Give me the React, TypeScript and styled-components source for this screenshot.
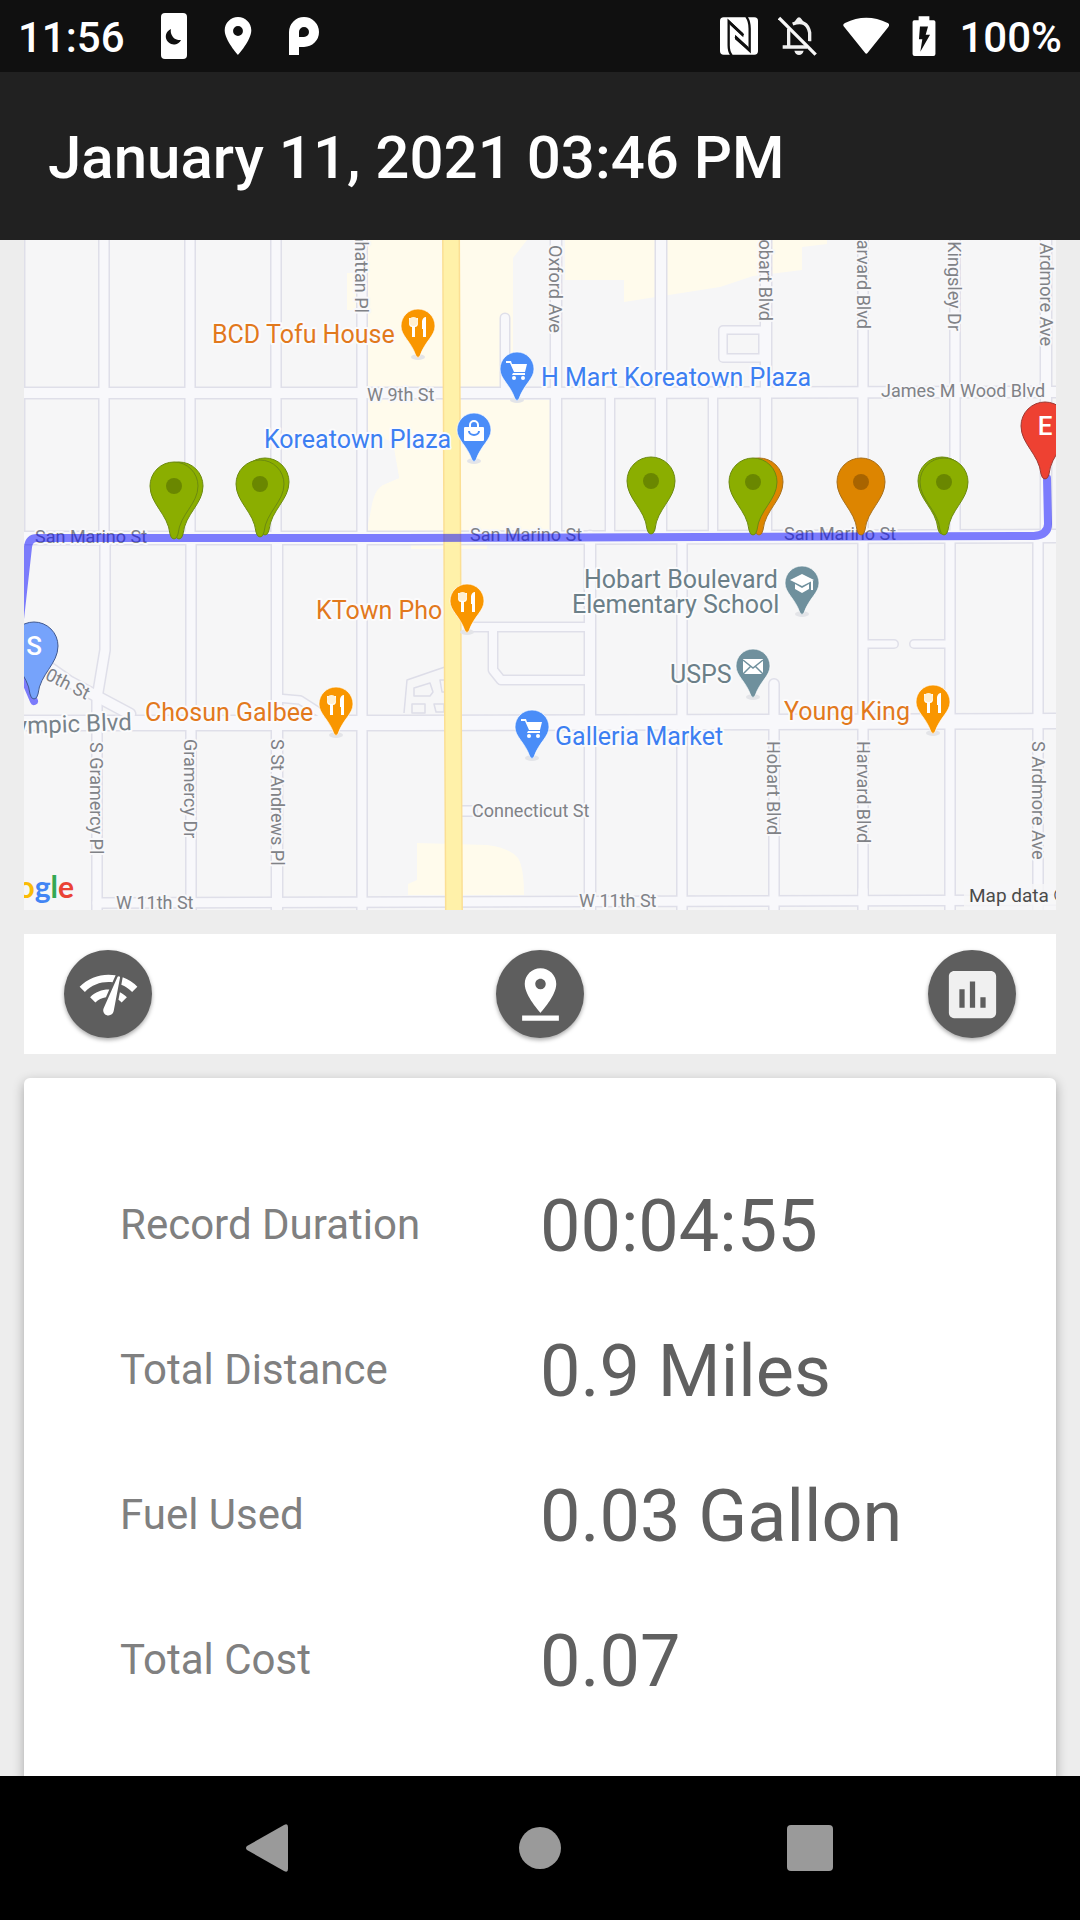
import React from "react";
import styled, { createGlobalStyle } from "styled-components";
import { MdAssessment, MdNetworkCheck, MdPinDrop } from "react-icons/md";

const GlobalStyle = createGlobalStyle`
  *, *::before, *::after { box-sizing: border-box; }
  body {
    margin: 0;
    background: #000;
    font-family: Roboto, "Noto Sans", sans-serif;
  }
`;

const Screen = styled.div`
  display: flex;
  flex-direction: column;
  height: 100vh;
  background: #ededed;
`;

const StatusBar = styled.div`
  display: flex;
  justify-content: space-between;
  flex: none;
  height: 72px;
  padding: 0 18px;
  background: #101010;
`;

const StatusText = styled.span`
  padding-top: 4px;
  color: #fff;
  font-size: 42px;
  font-weight: 500;
  line-height: 48px;
`;

const StatusGroup = styled.div<{ $gap: number }>`
  display: flex;
  align-items: center;
  gap: ${(p) => p.$gap}px;

  svg {
    display: block;
    flex: none;
  }
`;

const AppBar = styled.header`
  display: flex;
  align-items: center;
  flex: none;
  height: 168px;
  padding: 4px 48px 0;
  background: #212121;
`;

const Title = styled.h1`
  margin: 0;
  color: #fff;
  font-size: 60px;
  font-weight: 500;
  line-height: 72px;
`;

const Content = styled.main`
  display: flex;
  flex-direction: column;
  flex: 1;
  gap: 24px;
  min-height: 0;
  padding: 0 24px;
  overflow: hidden;
`;

const MapView = styled.svg`
  display: block;
  flex: none;
  width: 100%;
  aspect-ratio: 1032 / 670;
  background: #f6f6f7;
`;

const StreetText = styled.text`
  fill: #808287;
  stroke: #f8f8fa;
  stroke-width: 4px;
  stroke-linejoin: round;
  paint-order: stroke;
  font-size: 18px;
`;

const PlaceText = styled.text<{ $color: string }>`
  fill: ${(p) => p.$color};
  stroke: #fbfbfc;
  stroke-width: 4px;
  stroke-linejoin: round;
  paint-order: stroke;
  font-size: 25px;
`;

const AvenueText = styled(PlaceText)`
  font-size: 24px;
`;

const PinLetter = styled.text`
  fill: #fff;
  font-size: 26px;
  font-weight: 500;
  text-anchor: middle;
`;

const Wordmark = styled.text`
  font-family: Lato, Roboto, sans-serif;
  font-size: 30px;
  font-weight: 700;
  text-anchor: end;
`;

const Attribution = styled.text`
  fill: #4a4a4a;
  font-size: 19px;
`;

const Toolbar = styled.div`
  display: flex;
  align-items: center;
  justify-content: space-between;
  flex: none;
  height: 120px;
  padding: 0 40px;
  background: #fff;
`;

const RoundButton = styled.button<{ $color: string }>`
  display: flex;
  align-items: center;
  justify-content: center;
  width: 88px;
  height: 88px;
  padding: 0;
  border: 0;
  border-radius: 50%;
  background: #5e5e5e;
  box-shadow: 0 2px 4px rgba(0, 0, 0, 0.35);
  color: ${(p) => p.$color};
  font-size: 63px;
`;

const Card = styled.section`
  flex: 1 0 auto;
  padding: 76px 96px 48px;
  border-radius: 6px;
  background: #fff;
  box-shadow: 0 4px 12px rgba(0, 0, 0, 0.3);
`;

const Stats = styled.dl`
  margin: 0;
`;

const StatRow = styled.div`
  display: grid;
  grid-template-columns: 1fr 1fr;
  align-items: center;
  height: 145px;
`;

const StatLabel = styled.dt`
  padding-bottom: 4px;
  color: #808080;
  font-size: 42px;
  line-height: 48px;
`;

const StatValue = styled.dd`
  margin: 0;
  color: #606060;
  font-size: 72px;
  line-height: 84px;
  white-space: nowrap;
`;

const NavBar = styled.nav`
  display: flex;
  justify-content: center;
  flex: none;
  height: 144px;
  background: #000;
`;

const NavButton = styled.button`
  display: flex;
  align-items: center;
  justify-content: center;
  width: 25%;
  padding: 0;
  border: 0;
  background: none;
  color: #9a9a9a;
`;

const ORANGE = "#e2791d";
const BLUE = "#3d7ff2";
const SLATE = "#6b7f88";

const roads: { d: string; w: number }[] = [
  { d: "M19 240V536", w: 13 },
  { d: "M104 240V536", w: 12 },
  { d: "M190 240V536", w: 12 },
  { d: "M276 240V536", w: 12 },
  { d: "M362 240V910", w: 12 },
  { d: "M505 318V392", w: 11 },
  { d: "M556 240V536", w: 13 },
  { d: "M610 396V536", w: 11 },
  { d: "M661 240V536", w: 13 },
  { d: "M713 396V536", w: 11 },
  { d: "M766 240V536", w: 13 },
  { d: "M863 240V900", w: 12 },
  { d: "M955 240V536", w: 12 },
  { d: "M1046 240V536", w: 13 },
  { d: "M723 330V358H763V330Z", w: 10 },
  { d: "M105 536V650L97 698V930", w: 12 },
  { d: "M191 536V930", w: 12 },
  { d: "M277 536V930", w: 13 },
  { d: "M590 536V930", w: 13 },
  { d: "M682 536V930", w: 12 },
  { d: "M774 684V930", w: 12 },
  { d: "M863 890V930", w: 12 },
  { d: "M950 536V930", w: 12 },
  { d: "M1038 536V930", w: 12 },
  { d: "M457 627H590M493 627V670L501 680H590", w: 11 },
  { d: "M863 644H894M914 644H950", w: 10 },
  { d: "M454 811H472", w: 12 },
  { d: "M10 640L70 682L130 714", w: 13 },
  { d: "M277 698L300 700L325 716", w: 10 },
  { d: "M10 393H440L1070 392", w: 13 },
  { d: "M10 538H400L1070 536", w: 15 },
  { d: "M10 723H400L1070 721", w: 17 },
  { d: "M97 903L1070 900", w: 12 },
];

type StreetLabel = { text: string; x: number; y: number; rotate?: number; end?: boolean };

const streets: StreetLabel[] = [
  { text: "W 9th St", x: 367, y: 401 },
  { text: "James M Wood Blvd", x: 881, y: 397 },
  { text: "San Marino St", x: 35, y: 543 },
  { text: "San Marino St", x: 470, y: 541 },
  { text: "San Marino St", x: 784, y: 540 },
  { text: "Connecticut St", x: 472, y: 817 },
  { text: "W 11th St", x: 116, y: 909 },
  { text: "W 11th St", x: 579, y: 907 },
  { text: "Manhattan Pl", x: 355, y: 313, rotate: 90, end: true },
  { text: "Oxford Ave", x: 549, y: 245, rotate: 90 },
  { text: "Hobart Blvd", x: 759, y: 321, rotate: 90, end: true },
  { text: "Harvard Blvd", x: 857, y: 329, rotate: 90, end: true },
  { text: "S Kingsley Dr", x: 948, y: 331, rotate: 90, end: true },
  { text: "S Ardmore Ave", x: 1040, y: 346, rotate: 90, end: true },
  { text: "S Gramercy Pl", x: 90, y: 742, rotate: 90 },
  { text: "Gramercy Dr", x: 184, y: 739, rotate: 90 },
  { text: "S St Andrews Pl", x: 271, y: 739, rotate: 90 },
  { text: "Hobart Blvd", x: 767, y: 741, rotate: 90 },
  { text: "Harvard Blvd", x: 857, y: 741, rotate: 90 },
  { text: "S Ardmore Ave", x: 1032, y: 741, rotate: 90 },
  { text: "10th St", x: 86, y: 700, rotate: 27, end: true },
];

const places = [
  { text: "BCD Tofu House", x: 212, y: 343, color: ORANGE },
  { text: "H Mart Koreatown Plaza", x: 541, y: 386, color: BLUE },
  { text: "Koreatown Plaza", x: 264, y: 448, color: BLUE },
  { text: "KTown Pho", x: 316, y: 619, color: ORANGE },
  { text: "Hobart Boulevard", x: 584, y: 588, color: SLATE },
  { text: "Elementary School", x: 572, y: 613, color: SLATE },
  { text: "USPS", x: 670, y: 683, color: SLATE },
  { text: "Chosun Galbee", x: 145, y: 721, color: ORANGE },
  { text: "Galleria Market", x: 555, y: 745, color: BLUE },
  { text: "Young King", x: 784, y: 720, color: ORANGE },
];

type Glyph = "food" | "cart" | "bag" | "school" | "mail";

const poiPins: { x: number; y: number; glyph: Glyph }[] = [
  { x: 418, y: 309, glyph: "food" },
  { x: 517, y: 352, glyph: "cart" },
  { x: 474, y: 413, glyph: "bag" },
  { x: 467, y: 584, glyph: "food" },
  { x: 336, y: 687, glyph: "food" },
  { x: 532, y: 710, glyph: "cart" },
  { x: 802, y: 566, glyph: "school" },
  { x: 753, y: 649, glyph: "mail" },
  { x: 933, y: 685, glyph: "food" },
];

const glyphColor: Record<Glyph, string> = {
  food: "#f99600",
  cart: "#4a8df8",
  bag: "#4a8df8",
  school: "#6f909d",
  mail: "#6f909d",
};

const PinGlyph = ({ glyph }: { glyph: Glyph }) => {
  switch (glyph) {
    case "food":
      return (
        <g>
          <path d="M-9 9h9v5q0 4-3 4v10h-3V18q-3 0-3-4z" fill="#fff" />
          <circle cx="-4.500" cy="12.500" r="4.500" fill="#fff0d2" />
          <path d="M4 12q1-4 4-4v20H5v-8H4z" fill="#fff" />
        </g>
      );
    case "cart":
      return (
        <g fill="#fff">
          <path d="M-11 9h5l1 3H10L8 20H-3L-7 11h-4z" />
          <path d="M-4 21H8v2H-5z" />
          <circle cx="-3" cy="26" r="2" />
          <circle cx="6" cy="26" r="2" />
        </g>
      );
    case "bag":
      return (
        <g>
          <path d="M-4 15v-3a4 4 0 0 1 8 0v3" fill="none" stroke="#fff" strokeWidth="2" />
          <rect x="-10" y="14" width="20" height="14" rx="1" fill="#fff" />
          <path d="M-5 18a5 4 0 0 0 10 0" fill="none" stroke="#4a8df8" strokeWidth="2" />
        </g>
      );
    case "school":
      return (
        <g fill="#fff">
          <path d="M0 8l12 6-12 6-12-6z" />
          <path d="M-7 18l7 4 7-4v5l-7 4-7-4zM9 15h2v9H9z" />
        </g>
      );
    default:
      return (
        <g>
          <rect x="-10" y="10" width="20" height="15" fill="#fff" />
          <path d="M-10 11l10 8 10-8M-10 25l8-8M10 25l-8-8" fill="none" stroke="#6f909d" strokeWidth="1.500" />
        </g>
      );
  }
};

const PoiPin = ({ x, y, glyph }: { x: number; y: number; glyph: Glyph }) => (
  <g transform={`translate(${x} ${y})`}>
    <ellipse cx="0" cy="48" rx="7" ry="3" fill="#e3e4e8" />
    <path
      d="M0 0A17 17 0 0 1 17 17C17 27 7 32 2 47Q0 50-2 47C-7 32-17 27-17 17A17 17 0 0 1 0 0Z"
      fill={glyphColor[glyph]}
      stroke="#fff"
      strokeOpacity="0.7"
      strokeWidth="1"
    />
    <PinGlyph glyph={glyph} />
  </g>
);

type MarkerProps = { x: number; y: number; fill: string; edge: string; dot?: string; letter?: string };

const Marker = ({ x, y, fill, edge, dot, letter }: MarkerProps) => (
  <g transform={`translate(${x} ${y})`}>
    <path
      d="M0 0A24 24 0 0 1 24 24C24 42 6 52 4 72Q3 77 0 77Q-3 77-4 72C-6 52-24 42-24 24A24 24 0 0 1 0 0Z"
      fill={fill}
      stroke={edge}
      strokeWidth="1"
    />
    {dot && <circle cx="0" cy="24" r="8" fill={dot} />}
    {letter && (
      <PinLetter x="0" y="33">
        {letter}
      </PinLetter>
    )}
  </g>
);

const green = { fill: "#8bae00", edge: "#6c8a10" };
const amber = { fill: "#dd8500", edge: "#a8701c" };

const markers: MarkerProps[] = [
  { x: 179, y: 462, ...green },
  { x: 174, y: 462, ...green, dot: "#6a8700" },
  { x: 265, y: 458, ...green },
  { x: 260, y: 460, ...green, dot: "#6a8700" },
  { x: 651, y: 457, ...green, dot: "#6a8700" },
  { x: 759, y: 458, ...amber },
  { x: 753, y: 458, ...green, dot: "#6a8700" },
  { x: 861, y: 458, ...amber, dot: "#a86400" },
  { x: 942, y: 457, ...green },
  { x: 944, y: 458, ...green, dot: "#6a8700" },
  { x: 1045, y: 402, fill: "#ee4132", edge: "#9c3a34", letter: "E" },
];

const TripMap = () => (
  <MapView viewBox="24 240 1032 670" preserveAspectRatio="xMidYMid slice" role="img" aria-label="Trip map">
    <g fill="#fffbec">
      <path d="M347 273h14v37h-14z" />
      <path d="M368 240H527L513 258V392H368z" />
      <path d="M368 400H550V531H368V520L372 500Q376 486 385 484L399 478L393 443L368 430z" />
      <path d="M565 240H827V244L802 247V270L753 276L720 287L624 302V280H565z" />
      <path d="M411 543h76v6h-76z" />
      <path d="M417 843L487 845Q510 848 518 858Q524 868 524 895H408V884L417 880z" />
    </g>
    <path d="M368 430L393 443L399 478L385 484Q374 488 371 510L368 524z" fill="#f6f6f7" />

    <g fill="none" strokeLinecap="round" strokeLinejoin="round">
      {roads.map((r) => (
        <path key={r.d} d={r.d} stroke="#dfdfe9" strokeWidth={r.w} />
      ))}
      {roads.map((r) => (
        <path key={r.d} d={r.d} stroke="#f8f8fb" strokeWidth={r.w - 3} />
      ))}
    </g>

    <g fill="none" stroke="#dddde8" strokeWidth="1.500" strokeLinejoin="round">
      <path d="M404 713L407 680L436 670L445 667" />
      <path d="M414 688L430 683L433 692L430 696L414 696z" />
      <path d="M412 704h13v9h-13zM434 704h10v8h-8z" />
      <path d="M440 680h5v12h-3z" />
    </g>

    <path d="M451 230L453 720L454 920" stroke="#fbdf94" strokeWidth="18" fill="none" />
    <path d="M451 230L453 720L454 920" stroke="#fff1a9" strokeWidth="15" fill="none" />

    {streets.map((s) => (
      <StreetText
        key={`${s.text}-${s.x}-${s.y}`}
        textAnchor={s.end ? "end" : "start"}
        transform={`translate(${s.x} ${s.y}) rotate(${s.rotate ?? 0})`}
      >
        {s.text}
      </StreetText>
    ))}
    <AvenueText $color="#77828a" textAnchor="end" transform="translate(132 730) rotate(-2)">
      Olympic Blvd
    </AvenueText>
    {places.map((p) => (
      <PlaceText key={p.text} $color={p.color} x={p.x} y={p.y}>
        {p.text}
      </PlaceText>
    ))}
    {poiPins.map((p) => (
      <PoiPin key={`${p.x}-${p.y}`} {...p} />
    ))}

    <path
      d="M34 701L25 680L16 655L28 547Q29 538 37 538H400L1034 536Q1048 535 1048 524L1047 478"
      fill="none"
      stroke="#00f"
      strokeOpacity="0.5"
      strokeWidth="8"
      strokeLinecap="round"
      strokeLinejoin="round"
    />
    {markers.map((m) => (
      <Marker key={`${m.x}-${m.y}`} {...m} />
    ))}
    <Marker x={34} y={622} fill="#76a3fb" edge="#40588f" letter="S" />

    <path d="M964 884h92v26h-92z" fill="#f6f6f7" fillOpacity="0.8" />
    <Attribution x="969" y="902">
      Map data ©2021
    </Attribution>
    <Wordmark x="74" y="898">
      <tspan fill="#4285f4">G</tspan>
      <tspan fill="#ea4335">o</tspan>
      <tspan fill="#fbbc05">o</tspan>
      <tspan fill="#4285f4">g</tspan>
      <tspan fill="#34a853">l</tspan>
      <tspan fill="#ea4335">e</tspan>
    </Wordmark>
  </MapView>
);

const stats = [
  { label: "Record Duration", value: "00:04:55" },
  { label: "Total Distance", value: "0.9 Miles" },
  { label: "Fuel Used", value: "0.03 Gallon" },
  { label: "Total Cost", value: "0.07" },
];

export default function App() {
  return (
    <>
      <GlobalStyle />
      <Screen>
        <StatusBar>
          <StatusGroup $gap={36}>
            <StatusText>11:56</StatusText>
            <svg width="26" height="46" viewBox="0 0 26 46">
              <rect width="26" height="46" rx="4" fill="#fff" />
              <path d="M10 16A8 8 0 1 0 20 27A9 9 0 0 1 10 16Z" fill="#101010" />
            </svg>
            <svg width="30" height="38" viewBox="5 2 14 20" fill="#fff">
              <path d="M12 2C8.130 2 5 5.130 5 9c0 5.250 7 13 7 13s7-7.750 7-13c0-3.870-3.130-7-7-7zm0 10a2.600 2.600 0 1 1 0-5.200 2.600 2.600 0 0 1 0 5.200z" />
            </svg>
            <svg width="30" height="38" viewBox="0 0 30 38">
              <path
                fill="#fff"
                fillRule="evenodd"
                d="M15 0A15 15 0 0 1 15 30H10V38H0V15A15 15 0 0 1 15 0ZM15 10A5 5 0 0 0 10 15V20H15A5 5 0 0 0 15 10Z"
              />
            </svg>
          </StatusGroup>
          <StatusGroup $gap={23}>
            <StatusGroup $gap={20}>
              <svg width="38" height="38" viewBox="57 37 114 114" fill="none">
                <rect x="57" y="38" width="114" height="112" rx="11" fill="#fff" />
                <path
                  d="M92 152Q83 142 83 122V50L127 92M103 96L146 138V72Q146 50 136 36"
                  stroke="#101010"
                  strokeWidth="7"
                />
                <path d="M83 46L127 86V98L88 62ZM146 142L102 104V90L142 126Z" fill="#101010" />
              </svg>
              <svg width="42" height="40" viewBox="231 36 126 120" fill="none" stroke="#f0f0f0">
                <path d="M263 74V126M245 129H318M275 60Q318 44 326 86V112" strokeWidth="10" />
                <path d="M280 54H308L302 46Q294 34 286 46Z" fill="#f0f0f0" stroke="none" />
                <path d="M280 140H308Q304 153 294 153Q284 153 280 140Z" fill="#f0f0f0" stroke="none" />
                <path d="M241 36L351 146" stroke="#101010" strokeWidth="8" />
                <path d="M234 42L344 152" stroke="#f8f8f8" strokeWidth="10" />
              </svg>
            </StatusGroup>
            <svg width="46" height="38" viewBox="430 34 138 114" fill="#fff">
              <path d="M432 62Q428 56 436 52Q500 20 564 52Q572 56 566 64L504 141Q500 147 496 141Z" />
            </svg>
            <svg width="24" height="40" viewBox="636 32 70 119">
              <path
                d="M655 33H687V45H700Q705 45 705 50V145Q705 151 699 151H643Q637 151 637 145V50Q637 45 642 45H655Z"
                fill="#fff"
              />
              <path d="M659 63H683L676 88H689L660 138L666 101H656Z" fill="#101010" />
            </svg>
            <StatusText>100%</StatusText>
          </StatusGroup>
        </StatusBar>
        <AppBar>
          <Title>January 11, 2021 03:46 PM</Title>
        </AppBar>
        <Content>
          <TripMap />
          <Toolbar>
            <RoundButton type="button" $color="#fff" aria-label="Speed">
              <MdNetworkCheck />
            </RoundButton>
            <RoundButton type="button" $color="#fff" aria-label="Locations">
              <MdPinDrop />
            </RoundButton>
            <RoundButton type="button" $color="#f0f0f0" aria-label="Statistics">
              <MdAssessment />
            </RoundButton>
          </Toolbar>
          <Card>
            <Stats>
              {stats.map((s) => (
                <StatRow key={s.label}>
                  <StatLabel>{s.label}</StatLabel>
                  <StatValue>{s.value}</StatValue>
                </StatRow>
              ))}
            </Stats>
          </Card>
        </Content>
        <NavBar>
          <NavButton type="button" aria-label="Back">
            <svg width="48" height="48" viewBox="0 0 48 48" fill="currentColor">
              <path d="M1 22L38 1Q42-1 42 3V45Q42 49 38 47L1 26Q-1 24 1 22Z" />
            </svg>
          </NavButton>
          <NavButton type="button" aria-label="Home">
            <svg width="42" height="42" viewBox="0 0 42 42" fill="currentColor">
              <circle cx="21" cy="21" r="21" />
            </svg>
          </NavButton>
          <NavButton type="button" aria-label="Recent apps">
            <svg width="46" height="46" viewBox="0 0 46 46" fill="currentColor">
              <rect width="46" height="46" rx="4" />
            </svg>
          </NavButton>
        </NavBar>
      </Screen>
    </>
  );
}
